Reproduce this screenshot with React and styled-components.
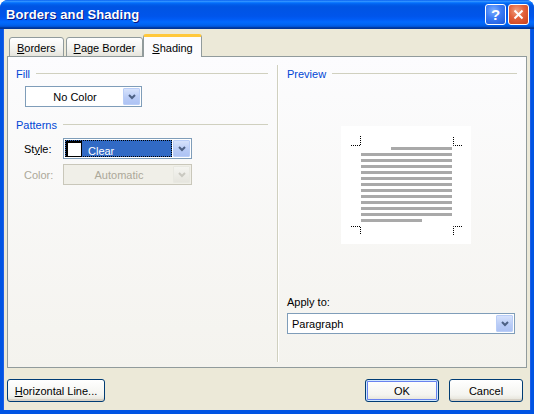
import React from "react";
import styled, { createGlobalStyle } from "styled-components";

const GlobalStyle = createGlobalStyle`
  html, body { margin: 0; padding: 0; background: #ffffff; }
  body { font-family: "Liberation Sans", Arial, sans-serif; font-size: 11px; }
`;

const Window = styled.div`
  width: 534px;
  height: 414px;
  display: flex;
  flex-direction: column;
  background: #0054e3;
  border-radius: 8px 8px 0 0;
  overflow: hidden;
`;

const TitleBar = styled.div`
  height: 29px;
  flex: none;
  display: flex;
  align-items: center;
  padding: 0 5px 0 6px;
  background: linear-gradient(
    #0058ee 0%, #3593ff 4%, #288eff 6%, #127dff 8%, #036ffc 10%,
    #0262ee 14%, #0057e5 20%, #0054e3 24%, #0055eb 56%, #005bf5 66%,
    #026afe 76%, #0062ef 86%, #0052d6 92%, #0040ab 94%, #003092 100%
  );
`;

const Title = styled.div`
  flex: 1;
  color: #ffffff;
  font-weight: bold;
  font-size: 13px;
  letter-spacing: 0.1px;
  text-shadow: 1px 1px 0 #0a1883;
`;

const CaptionButton = styled.div`
  width: 21px;
  height: 21px;
  box-sizing: border-box;
  margin-left: 2px;
  border: 1px solid #ffffff;
  border-radius: 3px;
  display: flex;
  align-items: center;
  justify-content: center;
  color: #ffffff;
  font-weight: bold;
  font-size: 15px;
  background: ${p =>
    p.close
      ? "radial-gradient(circle at 40% 30%, #f0a080 0%, #e2603a 45%, #c8401a 100%)"
      : "radial-gradient(circle at 40% 30%, #7fb0ff 0%, #3a7af5 45%, #1c58d8 100%)"};
`;

const Frame = styled.div`
  flex: 1;
  display: flex;
  flex-direction: column;
  margin: 0 3px 4px;
  padding: 5px 3px 8px;
  background: #ece9d8;
  border-left: 1px solid #1c5ee8;
  border-right: 1px solid #1c5ee8;
`;

const TabStrip = styled.div`
  height: 23px;
  display: flex;
  align-items: flex-end;
  padding-left: 2px;
  margin-bottom: -1px;
  position: relative;
  z-index: 1;
`;

const Tab = styled.div`
  height: ${p => (p.active ? "23px" : "20px")};
  box-sizing: border-box;
  padding: ${p => (p.active ? "3px 8px 0" : "3px 7px 0")};
  margin-right: ${p => (p.active ? "0" : "2px")};
  margin-left: ${p => (p.active ? "-2px" : "0")};
  border: 1px solid #919b9c;
  border-bottom: ${p => (p.active ? "none" : "1px solid #919b9c")};
  border-top: ${p => (p.active ? "3px solid #ffc83c" : "1px solid #919b9c")};
  border-radius: 3px 3px 0 0;
  background: ${p =>
    p.active ? "#fcfcfe" : "linear-gradient(#ffffff, #f3f3ef 60%, #e5e4dc)"};
  color: #000000;
  display: flex;
  align-items: center;
  line-height: 13px;
`;

const Key = styled.span`
  text-decoration: underline;
`;

const Panel = styled.div`
  height: 312px;
  box-sizing: border-box;
  border: 1px solid #919b9c;
  background: linear-gradient(#fcfcfe, #f4f3ee);
  display: flex;
`;

const LeftCol = styled.div`
  width: 269px;
  box-sizing: border-box;
  padding: 10px 9px 0 8px;
  display: flex;
  flex-direction: column;
`;

const Divider = styled.div`
  width: 1px;
  margin: 8px 0 5px;
  background: #d0d0bf;
  box-shadow: 1px 0 0 #ffffff;
`;

const RightCol = styled.div`
  flex: 1;
  box-sizing: border-box;
  padding: 10px 9px 0 9px;
  display: flex;
  flex-direction: column;
`;

const GroupHeader = styled.div`
  display: flex;
  align-items: center;
  height: 13px;
  margin-top: ${p => p.mt || 0}px;
  color: #0046d5;
  &::after {
    content: "";
    flex: 1;
    height: 1px;
    margin-left: 6px;
    background: #d0d0bf;
  }
`;

const Row = styled.div`
  display: flex;
  align-items: center;
  margin-top: ${p => p.mt || 0}px;
  padding-left: ${p => p.indent || 0}px;
`;

const FieldLabel = styled.div`
  width: 39px;
  color: ${p => (p.disabled ? "#aca899" : "#000000")};
`;

const Combo = styled.div`
  width: ${p => p.w}px;
  height: 21px;
  box-sizing: border-box;
  border: 1px solid ${p => (p.disabled ? "#c9c7ba" : "#7f9db9")};
  background: ${p => (p.disabled ? "#f0efe8" : "#ffffff")};
  display: flex;
  align-items: stretch;
  padding: 1px;
`;

const ComboValue = styled.div`
  flex: 1;
  display: flex;
  align-items: center;
  justify-content: ${p => (p.center ? "center" : "flex-start")};
  padding-left: ${p => (p.center ? 0 : 3)}px;
  color: ${p => (p.disabled ? "#aca899" : "#000000")};
`;

const Selected = styled.div`
  flex: 1;
  display: flex;
  align-items: center;
  background: #316ac5;
  color: #ffffff;
  outline: 1px dotted #000000;
  outline-offset: -1px;
  padding-left: 1px;
  margin-right: 1px;
`;

const Swatch = styled.div`
  width: 16px;
  height: 16px;
  box-sizing: border-box;
  background: #ffffff;
  border: 1px solid #000000;
  border-left-width: 2px;
  border-top-width: 2px;
`;

const SelectedText = styled.span`
  margin-left: 6px;
  padding-top: 4px;
`;

const ArrowBtn = styled.div`
  width: 17px;
  box-sizing: border-box;
  border: 1px solid ${p => (p.disabled ? "#e8e8e1" : "#b9cdf7")};
  border-radius: 1px;
  background: ${p =>
    p.disabled
      ? "linear-gradient(#f4f4f0, #e6e5de)"
      : "linear-gradient(#d6e2fc, #b8cbf6 60%, #aec3f4)"};
  display: flex;
  align-items: center;
  justify-content: center;
`;

const PreviewBox = styled.div`
  width: 130px;
  height: 118px;
  margin: 46px 0 0 54px;
  background: #ffffff;
`;

const ApplyLabel = styled.div`
  margin-top: 52px;
  height: 13px;
  line-height: 13px;
`;

const ButtonRow = styled.div`
  display: flex;
  margin-top: 11px;
  padding-right: 4px;
`;

const Button = styled.div`
  width: ${p => p.w}px;
  height: 23px;
  box-sizing: border-box;
  border: 1px solid #003c74;
  border-radius: 3px;
  background: linear-gradient(#ffffff, #f4f4f0 70%, #e3e1d6);
  box-shadow: ${p =>
    p.primary
      ? "inset 0 0 0 1px #cee7ff, inset 0 0 0 2px #6982ee"
      : "inset 0 -2px 0 #d6d0c5"};
  display: flex;
  align-items: center;
  justify-content: center;
  margin-left: ${p => p.ml || 0}px;
  color: #000000;
`;

const Spacer = styled.div`
  flex: 1;
`;

const Chevron = ({ disabled }) => (
  <svg width="8" height="6" viewBox="0 0 8 6">
    <path
      d="M1 1 L4 4 L7 1"
      fill="none"
      stroke={disabled ? "#c9c8c0" : "#4d6185"}
      strokeWidth="2"
    />
  </svg>
);

const ComboBox = ({ w, value, center, disabled }) => (
  <Combo w={w} disabled={disabled}>
    <ComboValue center={center} disabled={disabled}>
      {value}
    </ComboValue>
    <ArrowBtn disabled={disabled}>
      <Chevron disabled={disabled} />
    </ArrowBtn>
  </Combo>
);

const corners = [
  "M10 19.5 H19.5 V10",
  "M121 19.5 H112.5 V10",
  "M10 100.5 H19.5 V109",
  "M121 100.5 H112.5 V109"
];

const PagePreview = () => {
  const lines = [{ x: 50, w: 61 }];
  for (let i = 0; i < 11; i++) lines.push({ x: 20, w: 91 });
  lines.push({ x: 20, w: 61 });
  return (
    <PreviewBox>
      <svg width="130" height="118" viewBox="0 0 130 118">
        {corners.map(d => (
          <path
            key={d}
            d={d}
            fill="none"
            stroke="#000"
            strokeWidth="1"
            strokeDasharray="1 1"
          />
        ))}
        {lines.map((l, i) => (
          <rect key={i} x={l.x} y={21 + i * 6} width={l.w} height="3" fill="#a9a9a9" />
        ))}
      </svg>
    </PreviewBox>
  );
};

export default function App() {
  return (
    <>
      <GlobalStyle />
      <Window>
        <TitleBar>
          <Title>Borders and Shading</Title>
          <CaptionButton>?</CaptionButton>
          <CaptionButton close>
            <svg width="11" height="11" viewBox="0 0 11 11">
              <path d="M1.5 1.5 L9.5 9.5 M9.5 1.5 L1.5 9.5" stroke="#fff" strokeWidth="2" />
            </svg>
          </CaptionButton>
        </TitleBar>
        <Frame>
          <TabStrip>
            <Tab>
              <span><Key>B</Key>orders</span>
            </Tab>
            <Tab>
              <span><Key>P</Key>age Border</span>
            </Tab>
            <Tab active>
              <span><Key>S</Key>hading</span>
            </Tab>
          </TabStrip>
          <Panel>
            <LeftCol>
              <GroupHeader>Fill</GroupHeader>
              <Row mt={6} indent={9}>
                <ComboBox w={117} value="No Color" center />
              </Row>
              <GroupHeader mt={11}>Patterns</GroupHeader>
              <Row mt={7} indent={8}>
                <FieldLabel>
                  St<Key>y</Key>le:
                </FieldLabel>
                <Combo w={129}>
                  <Selected>
                    <Swatch />
                    <SelectedText>Clear</SelectedText>
                  </Selected>
                  <ArrowBtn>
                    <Chevron />
                  </ArrowBtn>
                </Combo>
              </Row>
              <Row mt={5} indent={8}>
                <FieldLabel disabled>Color:</FieldLabel>
                <ComboBox w={129} value="Automatic" center disabled />
              </Row>
            </LeftCol>
            <Divider />
            <RightCol>
              <GroupHeader>Preview</GroupHeader>
              <PagePreview />
              <ApplyLabel>Apply to:</ApplyLabel>
              <Row mt={4}>
                <ComboBox w={228} value="Paragraph" />
              </Row>
            </RightCol>
          </Panel>
          <ButtonRow>
            <Button w={98} ml={0}>
              <span><Key>H</Key>orizontal Line...</span>
            </Button>
            <Spacer />
            <Button w={74} primary>OK</Button>
            <Button w={74} ml={10}>Cancel</Button>
          </ButtonRow>
        </Frame>
      </Window>
    </>
  );
}
